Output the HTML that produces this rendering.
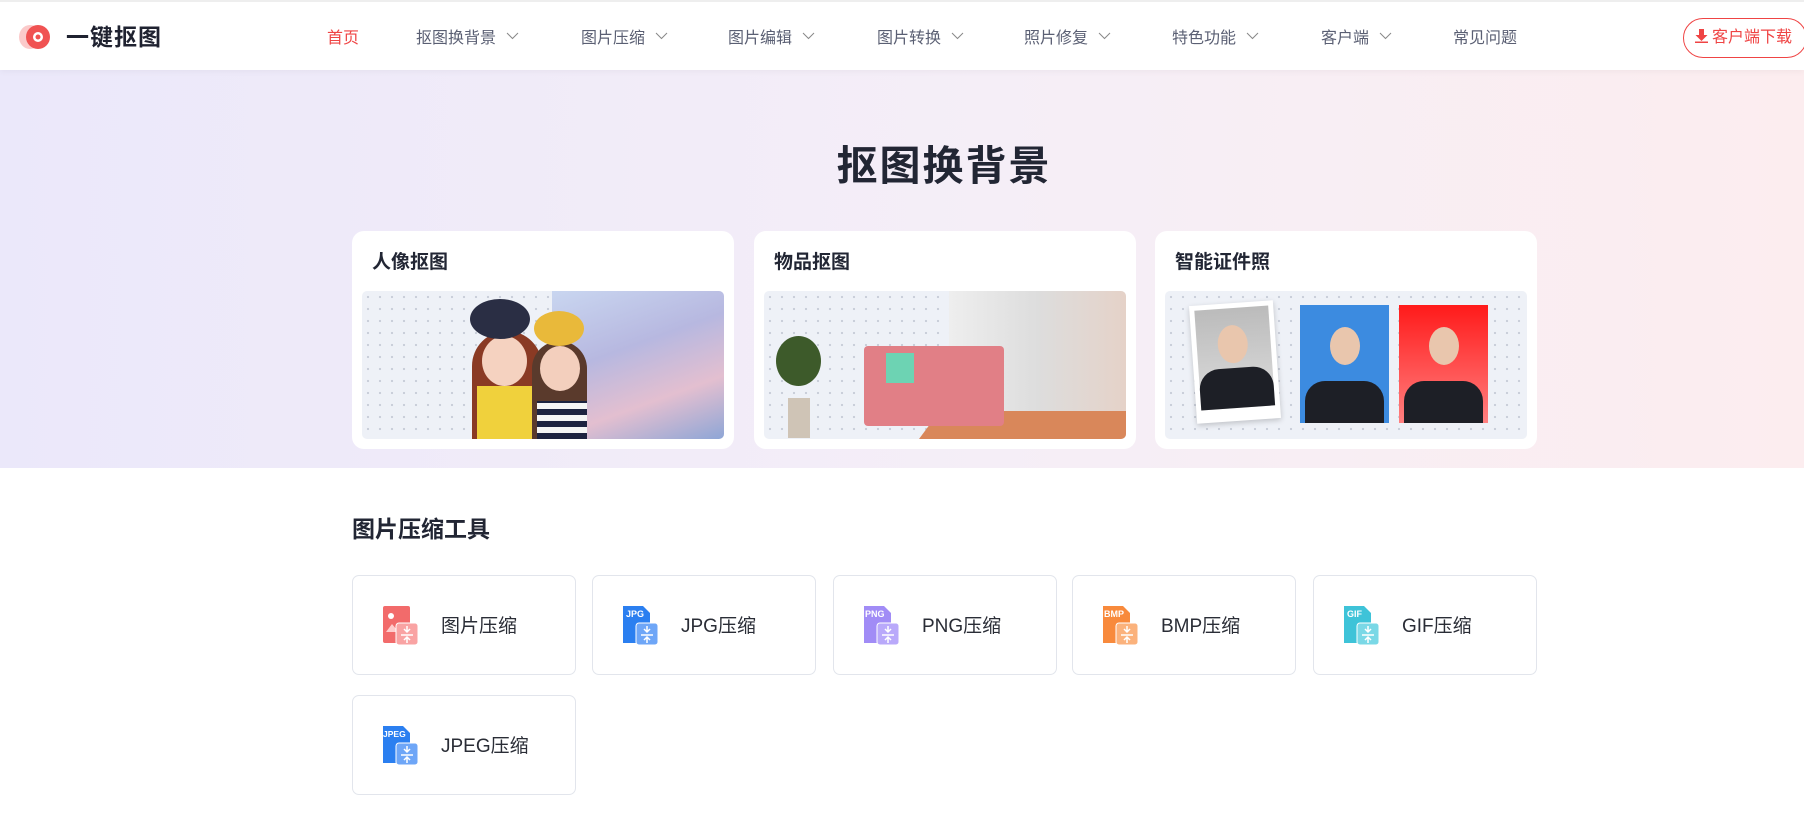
<!DOCTYPE html>
<html><head><meta charset="utf-8"><style>
*{margin:0;padding:0;box-sizing:border-box}
body{width:1804px;height:836px;overflow:hidden;background:#fff;font-family:"Liberation Sans","Noto Sans CJK SC",sans-serif;position:relative}
.hdr{position:absolute;left:0;top:0;width:1804px;height:70px;background:#fff;border-top:2px solid #eee;box-shadow:0 2px 6px rgba(0,0,0,.04);z-index:2}
.logo{position:absolute;left:17px;top:22px;width:35px;height:26px}
.brand{position:absolute;left:66px;top:16px;font-size:23px;font-weight:bold;color:#1f2230;letter-spacing:1px}
.nav{position:absolute;top:22px;font-size:16px;color:#5a5f73;white-space:nowrap}
.nav svg{margin-left:10px;vertical-align:3px}
.dl{position:absolute;left:1683px;top:16px;width:124px;height:40px;border:1px solid #ef4444;border-radius:20px;color:#ef4444;font-size:16px;line-height:37px;padding-left:11px;white-space:nowrap}
.hero{position:absolute;left:0;top:70px;width:1804px;height:398px;background:linear-gradient(90deg,#ebe8fa,#f5eef7 55%,#fcedef)}
h1{position:absolute;left:0;width:1888px;top:132px;text-align:center;font-size:41px;color:#222634;font-weight:bold;letter-spacing:2px}
.card{position:absolute;top:231px;width:382px;height:218px;background:#fff;border-radius:12px}
.card b{position:absolute;left:20px;top:16px;font-size:19px;color:#222634}
.img{position:absolute;left:10px;top:60px;width:362px;height:148px;border-radius:5px;overflow:hidden;background-color:#eef1f7;background-image:radial-gradient(#c8cdd8 1px,transparent 1.3px);background-size:12px 12px}
h2{position:absolute;left:352px;top:510px;font-size:23px;color:#222634;font-weight:bold}
.t{position:absolute;width:224px;height:100px;border:1px solid #e2e5ec;border-radius:7px;background:#fff}
.t span{position:absolute;left:88px;top:35px;font-size:19px;color:#2a2d36}
.ic{position:absolute;left:30px;top:28px;width:37px;height:42px}
</style></head><body>
<div class="hdr">
<svg class="logo" viewBox="0 0 35 26"><ellipse cx="13" cy="13" rx="11" ry="12" fill="#fbcaca"/><circle cx="21" cy="13" r="12" fill="#f05252"/><circle cx="21" cy="13" r="5" fill="#fff"/><circle cx="21" cy="13" r="2.5" fill="#f05252"/></svg>
<div class="brand">一键抠图</div>
<div class="nav" style="left:327px;color:#ef4444">首页</div>
<div class="nav" style="left:416px">抠图换背景<svg width="13" height="8"><path d="M1 1l5.5 5.5L12 1" stroke="#888" fill="none"/></svg></div>
<div class="nav" style="left:581px">图片压缩<svg width="13" height="8"><path d="M1 1l5.5 5.5L12 1" stroke="#888" fill="none"/></svg></div>
<div class="nav" style="left:728px">图片编辑<svg width="13" height="8"><path d="M1 1l5.5 5.5L12 1" stroke="#888" fill="none"/></svg></div>
<div class="nav" style="left:877px">图片转换<svg width="13" height="8"><path d="M1 1l5.5 5.5L12 1" stroke="#888" fill="none"/></svg></div>
<div class="nav" style="left:1024px">照片修复<svg width="13" height="8"><path d="M1 1l5.5 5.5L12 1" stroke="#888" fill="none"/></svg></div>
<div class="nav" style="left:1172px">特色功能<svg width="13" height="8"><path d="M1 1l5.5 5.5L12 1" stroke="#888" fill="none"/></svg></div>
<div class="nav" style="left:1321px">客户端<svg width="13" height="8"><path d="M1 1l5.5 5.5L12 1" stroke="#888" fill="none"/></svg></div>
<div class="nav" style="left:1453px">常见问题</div>
<div class="dl"><svg width="13" height="14" style="vertical-align:-1px;margin-right:4px"><path d="M4 0h5v6h3.5L6.5 12 .5 6H4z" fill="#ef4444"/><rect x="0" y="12.5" width="13" height="1.5" fill="#ef4444"/></svg>客户端下载</div>
</div>
<div class="hero"></div>
<h1 style="left:0;width:1888px">抠图换背景</h1>
<div class="card" style="left:352px"><b>人像抠图</b><div class="img">
<div style="position:absolute;left:190px;top:0;width:172px;height:148px;background:linear-gradient(160deg,#c9d6f0,#b7b8e0 40%,#e3bfd0 70%,#8ea6d6)"></div>
<div style="position:absolute;left:110px;top:40px;width:70px;height:108px;border-radius:35px 35px 0 0;background:#8a3a24"></div>
<div style="position:absolute;left:115px;top:95px;width:60px;height:53px;background:#f0d13c"></div>
<div style="position:absolute;left:120px;top:45px;width:45px;height:50px;border-radius:50%;background:#f5d2c0"></div>
<div style="position:absolute;left:108px;top:8px;width:60px;height:40px;border-radius:50%;background:#2a2e44"></div>
<div style="position:absolute;left:170px;top:50px;width:55px;height:98px;border-radius:28px 28px 0 0;background:#5a3a2c"></div>
<div style="position:absolute;left:175px;top:110px;width:50px;height:38px;background:repeating-linear-gradient(0deg,#1d2340 0 6px,#f5f5f5 6px 12px)"></div>
<div style="position:absolute;left:178px;top:55px;width:40px;height:45px;border-radius:50%;background:#f3cfbd"></div>
<div style="position:absolute;left:172px;top:20px;width:50px;height:35px;border-radius:50%;background:#e9b93a"></div>
</div></div>
<div class="card" style="left:754px"><b>物品抠图</b><div class="img">
<div style="position:absolute;left:185px;top:0;width:177px;height:148px;background:linear-gradient(90deg,#eee,#ddd 50%,#e5d2c8)"></div>
<div style="position:absolute;left:155px;top:120px;width:207px;height:28px;background:#d9875a;clip-path:polygon(10% 0,100% 0,100% 100%,0 100%)"></div>
<div style="position:absolute;left:100px;top:55px;width:140px;height:80px;background:#e17f86;border-radius:4px"></div>
<div style="position:absolute;left:122px;top:62px;width:28px;height:30px;background:#6dd3b3"></div>
<div style="position:absolute;left:12px;top:45px;width:45px;height:50px;border-radius:50%;background:#3d5a2a"></div>
<div style="position:absolute;left:24px;top:107px;width:22px;height:40px;background:#cfc4b6"></div>
</div></div>
<div class="card" style="left:1155px"><b>智能证件照</b><div class="img">
<div style="position:absolute;left:28px;top:12px;width:84px;height:118px;background:#fff;transform:rotate(-4deg);box-shadow:0 2px 6px rgba(0,0,0,.2)"><div style="margin:5px;height:100px;background:linear-gradient(#bbb,#ddd)"><div style="position:absolute;left:5px;right:5px;bottom:13px;height:40px;background:#1d1f26;border-radius:20px 20px 0 0"></div><div style="position:absolute;left:26px;top:22px;width:30px;height:38px;border-radius:50%;background:#e9c6ad"></div></div></div>
<div style="position:absolute;left:135px;top:14px;width:89px;height:118px;background:#3c8be0"><div style="position:absolute;left:5px;right:5px;bottom:0;height:42px;background:#1d1f26;border-radius:20px 20px 0 0"></div><div style="position:absolute;left:30px;top:22px;width:30px;height:38px;border-radius:50%;background:#e9c6ad"></div></div>
<div style="position:absolute;left:234px;top:14px;width:89px;height:118px;background:linear-gradient(#ff1a1a,#ff8080)"><div style="position:absolute;left:5px;right:5px;bottom:0;height:42px;background:#1d1f26;border-radius:20px 20px 0 0"></div><div style="position:absolute;left:30px;top:22px;width:30px;height:38px;border-radius:50%;background:#e9c6ad"></div></div>
</div></div>
<h2>图片压缩工具</h2>
<div class="t" style="left:352px;top:575px"><svg class="ic" viewBox="0 0 37 42"><rect x="0" y="2" width="27" height="37" rx="2" fill="#f26b6b"/><circle cx="8" cy="12" r="3" fill="#fff"/><path d="M3 28l6-8 5 6 4-3 6 5z" fill="#fcc"/><rect x="13" y="19" width="22" height="22" rx="3" fill="#f9a3a3" stroke="#fff"/><path d="M24 22v5M21 25l3 3 3-3M18 31h12M24 39v-5M21 36l3-3 3 3" stroke="#fff" stroke-width="1.5" fill="none"/></svg><span>图片压缩</span></div>
<div class="t" style="left:592px;top:575px"><svg class="ic" viewBox="0 0 37 42"><path d="M0 2h20l7 7v30H0z" fill="#2b7ff0"/><text x="3" y="13" font-size="9" fill="#fff" font-family="Liberation Sans" font-weight="bold">JPG</text><rect x="13" y="19" width="22" height="22" rx="3" fill="#6ea6f7" stroke="#fff"/><path d="M24 22v5M21 25l3 3 3-3M18 31h12M24 39v-5M21 36l3-3 3 3" stroke="#fff" stroke-width="1.5" fill="none"/></svg><span>JPG压缩</span></div>
<div class="t" style="left:833px;top:575px"><svg class="ic" viewBox="0 0 37 42"><path d="M0 2h20l7 7v30H0z" fill="#a18cf6"/><text x="1" y="13" font-size="9" fill="#fff" font-family="Liberation Sans" font-weight="bold">PNG</text><rect x="13" y="19" width="22" height="22" rx="3" fill="#b9a9fa" stroke="#fff"/><path d="M24 22v5M21 25l3 3 3-3M18 31h12M24 39v-5M21 36l3-3 3 3" stroke="#fff" stroke-width="1.5" fill="none"/></svg><span>PNG压缩</span></div>
<div class="t" style="left:1072px;top:575px"><svg class="ic" viewBox="0 0 37 42"><path d="M0 2h20l7 7v30H0z" fill="#f88a3c"/><text x="1" y="13" font-size="9" fill="#fff" font-family="Liberation Sans" font-weight="bold">BMP</text><rect x="13" y="19" width="22" height="22" rx="3" fill="#fbb27c" stroke="#fff"/><path d="M24 22v5M21 25l3 3 3-3M18 31h12M24 39v-5M21 36l3-3 3 3" stroke="#fff" stroke-width="1.5" fill="none"/></svg><span>BMP压缩</span></div>
<div class="t" style="left:1313px;top:575px"><svg class="ic" viewBox="0 0 37 42"><path d="M0 2h20l7 7v30H0z" fill="#3ec3d8"/><text x="3" y="13" font-size="9" fill="#fff" font-family="Liberation Sans" font-weight="bold">GIF</text><rect x="13" y="19" width="22" height="22" rx="3" fill="#7ad8e6" stroke="#fff"/><path d="M24 22v5M21 25l3 3 3-3M18 31h12M24 39v-5M21 36l3-3 3 3" stroke="#fff" stroke-width="1.5" fill="none"/></svg><span>GIF压缩</span></div>
<div class="t" style="left:352px;top:695px"><svg class="ic" viewBox="0 0 37 42"><path d="M0 2h20l7 7v30H0z" fill="#2b7ff0"/><text x="0" y="13" font-size="8.5" fill="#fff" font-family="Liberation Sans" font-weight="bold">JPEG</text><rect x="13" y="19" width="22" height="22" rx="3" fill="#6ea6f7" stroke="#fff"/><path d="M24 22v5M21 25l3 3 3-3M18 31h12M24 39v-5M21 36l3-3 3 3" stroke="#fff" stroke-width="1.5" fill="none"/></svg><span>JPEG压缩</span></div>
</body></html>
